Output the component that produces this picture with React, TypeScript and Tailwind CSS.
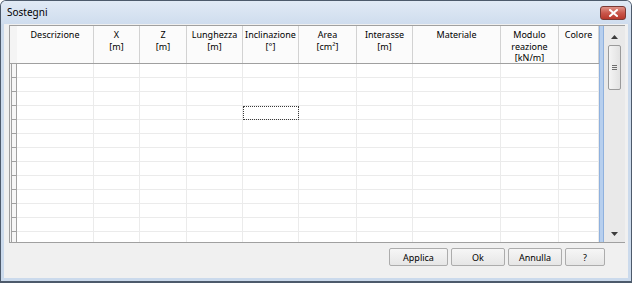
import React from "react";

const COLUMNS = [
  { w: "w-[77px]", lines: ["Descrizione"] },
  { w: "w-[46px]", lines: ["X", "[m]"] },
  { w: "w-[47px]", lines: ["Z", "[m]"] },
  { w: "w-[56px]", lines: ["Lunghezza", "[m]"] },
  { w: "w-[56px]", lines: ["Inclinazione", "[°]"] },
  { w: "w-[58px]", lines: ["Area", "[cm²]"] },
  { w: "w-[56px]", lines: ["Interasse", "[m]"] },
  { w: "w-[88px]", lines: ["Materiale"] },
  { w: "w-[58px]", lines: ["Modulo", "reazione", "[kN/m]"] },
  { w: "w-[40px]", lines: ["Colore"] },
];

const ROWS = Array.from({ length: 13 }, (_, i) => i);

const font = { fontFamily: '"Noto Sans", "Open Sans", sans-serif' };

function Scrollbar() {
  return (
    <div className="flex w-[21px] flex-col items-center bg-[#e9e9e9] pt-[2px]">
      {/* up arrow */}
      <div className="flex h-[17px] w-full items-center justify-center">
        <svg width="7" height="4" viewBox="0 0 7 4">
          <path d="M0 4 L3.5 0 L7 4 Z" fill="#3c3c3c" />
        </svg>
      </div>
      {/* thumb */}
      <div className="flex h-[45px] w-[13px] items-center justify-center rounded-[2px] border border-[#9a9a9a] bg-gradient-to-r from-[#f4f4f4] to-[#e2e2e2]">
        <div className="flex flex-col gap-[1px]">
          <div className="h-[1px] w-[5px] bg-[#6e6e6e]" />
          <div className="h-[1px] w-[5px] bg-[#6e6e6e]" />
          <div className="h-[1px] w-[5px] bg-[#6e6e6e]" />
        </div>
      </div>
      <div className="flex-1" />
      {/* down arrow */}
      <div className="flex h-[17px] w-full items-center justify-center">
        <svg width="7" height="4" viewBox="0 0 7 4">
          <path d="M0 0 L7 0 L3.5 4 Z" fill="#3c3c3c" />
        </svg>
      </div>
    </div>
  );
}

function Button({ label, w }: { label: string; w: string }) {
  return (
    <button
      className={`${w} h-[18px] rounded-[2px] border border-[#acacac] bg-gradient-to-b from-[#f6f6f6] to-[#e6e6e6] text-[9px] leading-none text-black`}
    >
      {label}
    </button>
  );
}

export default function App() {
  return (
    <div className="h-[283px] w-[632px] bg-white" style={font}>
      <div className="flex h-full flex-col rounded-t-[6px] border border-b-2 border-[#4d5a6b] bg-[#cbdaec]">
        {/* Title bar */}
        <div className="flex h-[23px] items-center justify-between rounded-t-[5px] bg-gradient-to-b from-[#e1eaf5] to-[#cfddee] pl-[6px] pr-[5px]">
          <span className="text-[10px] text-black">Sostegni</span>
          <div className="mt-[1px] flex h-[14px] w-[26px] items-center justify-center rounded-[3px] border border-[#7a3a35] bg-gradient-to-b from-[#e0948a] via-[#c9574c] to-[#b8382c]">
            <svg width="9" height="8" viewBox="0 0 9 8">
              <path d="M1 1 L8 7 M8 1 L1 7" stroke="#ffffff" strokeWidth="2" strokeLinecap="square" />
            </svg>
          </div>
        </div>

        {/* Client area */}
        <div className="mx-[3px] mb-[3px] flex flex-1 flex-col bg-[#f0f0f0]">
          <div className="ml-[5px] mt-[1px] flex h-[218px] w-[616px] overflow-hidden border-y border-l border-[#a0a0a0] bg-white">
            {/* row header gutter */}
            <div className="flex w-[7px] flex-col bg-[#f4f4f4]">
              <div className="h-[38px] shrink-0 border-b border-[#a0a0a0]" />
              {ROWS.map((r) => (
                <div
                  key={r}
                  className="ml-[1px] h-[14px] shrink-0 border-x border-b border-[#a0a0a0] bg-[#f6f6f6]"
                />
              ))}
            </div>

            {/* columns */}
            <div className="flex flex-col">
              <div className="flex h-[38px] shrink-0 border-b border-[#a0a0a0] bg-[#fbfbfb]">
                {COLUMNS.map((c, i) => (
                  <div
                    key={i}
                    className={`${c.w} flex shrink-0 flex-col items-center border-r border-[#d2d2d2] pt-[3px] text-[9px] leading-[11.5px] text-black`}
                  >
                    {c.lines.map((l, j) => (
                      <span key={j}>{l}</span>
                    ))}
                  </div>
                ))}
              </div>
              {ROWS.map((r) => (
                <div key={r} className="flex h-[14px] shrink-0">
                  {COLUMNS.map((c, i) => (
                    <div
                      key={i}
                      className={`${c.w} shrink-0 border-b border-r border-[#ebebeb] ${
                        r === 3 && i === 4
                          ? "outline-1 -outline-offset-1 outline-dotted outline-[#3a3a3a]"
                          : ""
                      }`}
                    />
                  ))}
                </div>
              ))}
            </div>

            {/* selection strip */}
            <div className="w-[5px] border-x border-[#8fb1de] bg-[#b7cfee]" />

            <Scrollbar />
          </div>

          {/* Buttons */}
          <div className="mr-[23px] mt-[5px] flex justify-end gap-[3px]">
            <Button label="Applica" w="w-[59px]" />
            <Button label="Ok" w="w-[54px]" />
            <Button label="Annulla" w="w-[54px]" />
            <Button label="?" w="w-[40px]" />
          </div>
        </div>
      </div>
    </div>
  );
}
